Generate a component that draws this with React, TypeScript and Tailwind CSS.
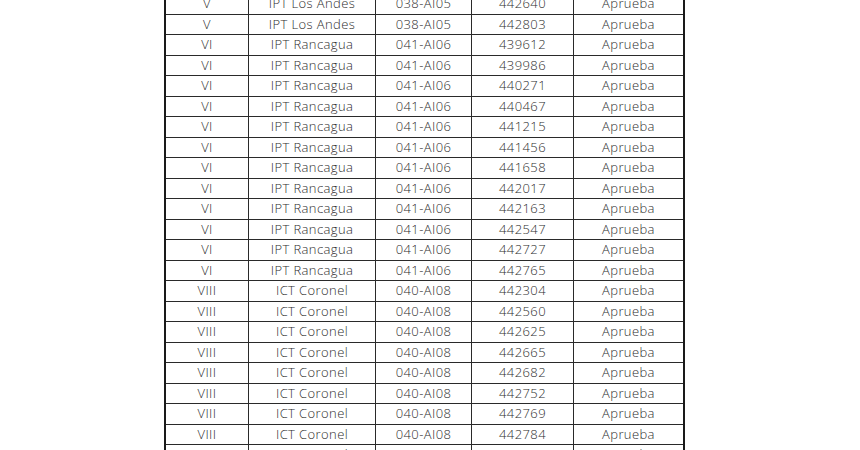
import React from 'react';

type Row = { region: string; office: string; code: string; id: string; result: string };

const losAndes = ['442640', '442803'];
const rancagua = [
  '439612', '439986', '440271', '440467', '441215', '441456',
  '441658', '442017', '442163', '442547', '442727', '442765',
];
const coronel = [
  '442304', '442560', '442625', '442665', '442682', '442752', '442769', '442784', '442798',
];

const rows: Row[] = [
  ...losAndes.map(id => ({ region: 'V', office: 'IPT Los Andes', code: '038-AI05', id, result: 'Aprueba' })),
  ...rancagua.map(id => ({ region: 'VI', office: 'IPT Rancagua', code: '041-AI06', id, result: 'Aprueba' })),
  ...coronel.map(id => ({ region: 'VIII', office: 'ICT Coronel', code: '040-AI08', id, result: 'Aprueba' })),
];

const Cell: React.FC<{ w: string; last?: boolean; children: React.ReactNode }> = ({ w, last, children }) => (
  <div
    className={`${w} flex items-center justify-center shrink-0 ${last ? '' : 'border-r border-[#2a2a2a]'}`}
  >
    {children}
  </div>
);

export default function App() {
  return (
    <div className="w-[860px] h-[450px] overflow-hidden bg-white">
      <div
        className="ml-[164px] -mt-[6px] w-[521px] border-x-2 border-[#1a1a1a] text-[13px] font-light text-[#2e2e2e] tracking-[0.4px]"
        style={{ fontFamily: '"Open Sans", "Noto Sans", sans-serif' }}
      >
        {rows.map((r, i) => (
          <div key={i} className="flex h-[20.5px] border-b border-[#2a2a2a] leading-none">
            <Cell w="w-[83px]">{r.region}</Cell>
            <Cell w="w-[127px]">{r.office}</Cell>
            <Cell w="w-[96px]">{r.code}</Cell>
            <Cell w="w-[102px]">{r.id}</Cell>
            <Cell w="w-[109px]" last>{r.result}</Cell>
          </div>
        ))}
      </div>
    </div>
  );
}
